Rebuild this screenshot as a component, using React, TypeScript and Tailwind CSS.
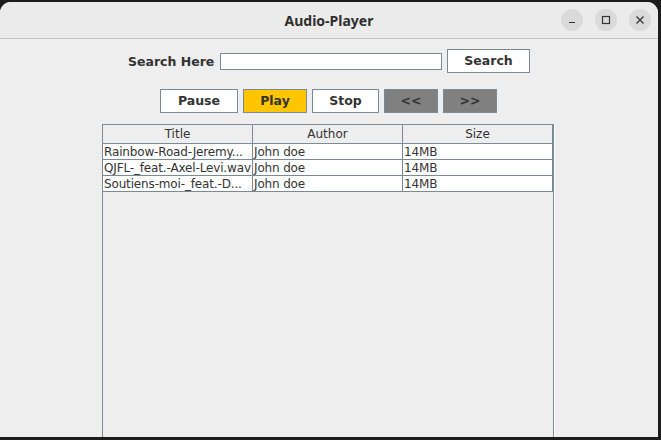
const rows = [
  { title: 'Rainbow-Road-Jeremy...', author: 'John doe', size: '14MB' },
  { title: 'QJFL-_feat.-Axel-Levi.wav', author: 'John doe', size: '14MB' },
  { title: 'Soutiens-moi-_feat.-D...', author: 'John doe', size: '14MB' },
];

const swing = { fontFamily: '"DejaVu Sans", sans-serif' };

function WinButton({ children }: { children: React.ReactNode }) {
  return (
    <div className="w-[22px] h-[22px] rounded-full bg-[#dadada] flex items-center justify-center">
      {children}
    </div>
  );
}

export default function App() {
  return (
    <div className="w-[661px] h-[440px] bg-[#1c1c1c] overflow-hidden">
      <div className="w-[658px] h-[435px] mt-[2px] rounded-t-[11px] bg-[#eeeeee] flex flex-col overflow-hidden">
        {/* Title bar */}
        <div className="h-[37px] shrink-0 bg-[#ebebeb] border-b border-[#c4c4c4] relative flex items-center justify-center">
          <span
            className="text-[14px] font-bold text-[#2e2e2e]"
            style={{ fontFamily: '"Noto Sans", sans-serif' }}
          >
            Audio-Player
          </span>
          <div className="absolute right-[7px] top-[7px] flex gap-[12px]">
            <WinButton>
              <svg width="10" height="10" viewBox="0 0 10 10">
                <path d="M2 7.5h6" stroke="#333" strokeWidth="1.2" />
              </svg>
            </WinButton>
            <WinButton>
              <svg width="10" height="10" viewBox="0 0 10 10">
                <rect x="1.5" y="1.5" width="7" height="7" fill="none" stroke="#333" strokeWidth="1.2" />
              </svg>
            </WinButton>
            <WinButton>
              <svg width="10" height="10" viewBox="0 0 10 10">
                <path d="M1.5 1.5l7 7M8.5 1.5l-7 7" stroke="#333" strokeWidth="1.3" />
              </svg>
            </WinButton>
          </div>
        </div>

        {/* Content */}
        <div className="flex-1 flex flex-col pt-[10px] min-h-0" style={swing}>
          {/* Search row */}
          <div className="flex items-center justify-center h-[24px]">
            <span className="w-[86px] pt-[2px] whitespace-nowrap text-[12.5px] font-bold text-[#333]">Search Here</span>
            <div className="w-[222px] h-[17px] ml-[6px] bg-white border border-[#7a8a99]" />
            <button className="w-[83px] h-[24px] ml-[5px] pt-[1px] bg-white border border-[#7a8a99] text-[12.5px] font-bold text-[#333]">
              Search
            </button>
          </div>

          {/* Controls */}
          <div className="flex items-center justify-center gap-[5px] h-[24px] mt-[16px] pr-[1px]">
            <button className="w-[78px] h-[24px] pt-[1px] bg-white border border-[#7a8a99] text-[12.5px] font-bold text-[#333]">
              Pause
            </button>
            <button className="w-[64px] h-[24px] pt-[1px] bg-[#ffc600] border border-[#7a8a99] text-[12.5px] font-bold text-[#333]">
              Play
            </button>
            <button className="w-[67px] h-[24px] pt-[1px] bg-white border border-[#7a8a99] text-[12.5px] font-bold text-[#333]">
              Stop
            </button>
            <button className="w-[54px] h-[24px] pt-[1px] bg-[#808080] border border-[#7a8a99] text-[12.5px] font-bold text-[#333]">
              &lt;&lt;
            </button>
            <button className="w-[54px] h-[24px] pt-[1px] bg-[#808080] border border-[#7a8a99] text-[12.5px] font-bold text-[#333]">
              &gt;&gt;
            </button>
          </div>

          {/* Table */}
          <div className="flex-1 flex justify-start mt-[11px] pl-[102px] min-h-0">
            <div className="w-[452px] h-full border-l border-t border-r border-[#7a8a99] shadow-[1px_0_0_#ffffff] bg-[#eeeeee]">
              <div className="flex">
                {['Title', 'Author', 'Size'].map((h) => (
                  <div
                    key={h}
                    className="w-[150px] h-[19px] border-r border-b border-[#7a8a99] text-center text-[12px] leading-[18px] text-[#333]"
                  >
                    {h}
                  </div>
                ))}
              </div>
              {rows.map((r) => (
                <div key={r.title} className="flex bg-white">
                  {[r.title, r.author, r.size].map((c, i) => (
                    <div
                      key={i}
                      className="w-[150px] h-[16px] border-r border-b border-[#7a8a99] pl-[1px] text-[12px] tracking-[-0.15px] leading-[16px] text-[#333] whitespace-nowrap overflow-hidden"
                    >
                      {c}
                    </div>
                  ))}
                </div>
              ))}
            </div>
          </div>
        </div>
      </div>
    </div>
  );
}
